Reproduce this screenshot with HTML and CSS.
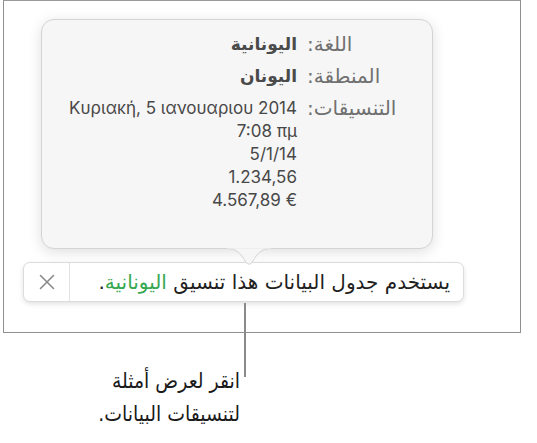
FILE: index.html
```html
<!DOCTYPE html>
<html lang="ar">
  <head>
    <meta charset="UTF-8" />
    <meta name="viewport" content="width=device-width, initial-scale=1.0" />
    <link rel="stylesheet" href="styles.css">
    <title>تنسيق اللغة والمنطقة</title>
  </head>
  <body>
    <div class="frame">
      <!-- popover with the format samples -->
      <div class="popover" dir="rtl">
        <div class="info-grid">
          <div class="info-label">اللغة:</div>
          <div class="info-value bold">اليونانية</div>
          <div class="info-label">المنطقة:</div>
          <div class="info-value bold">اليونان</div>
          <div class="info-label">التنسيقات:</div>
          <div class="info-value latin">
            <div dir="ltr">Κυριακή, 5 ιανουαριου 2014</div>
            <div dir="ltr">7:08 πμ</div>
            <div dir="ltr">5/1/14</div>
            <div dir="ltr">1.234,56</div>
            <div dir="ltr">4.567,89 €</div>
          </div>
        </div>
        <svg class="popover-arrow" width="44" height="19" viewBox="0 0 44 19">
          <path d="M0 0.5 C10 0.5 14 6 18 13 Q22 19.5 26 13 C30 6 34 0.5 44 0.5" fill="#f6f6f6" stroke="#d4d4d4" stroke-width="1" />
          <rect x="0" y="-1" width="44" height="1.5" fill="#f6f6f6" />
        </svg>
      </div>

      <!-- language banner -->
      <div class="banner">
        <div class="banner-close">
          <svg width="16" height="16" viewBox="0 0 16 16">
            <path d="M1.5 1.5 L14.5 14.5 M14.5 1.5 L1.5 14.5" stroke="#8a8a8a" stroke-width="1.6" stroke-linecap="round" />
          </svg>
        </div>
        <div class="banner-text" dir="rtl">
          <span>يستخدم جدول البيانات هذا تنسيق <span class="green">اليونانية</span>.</span>
        </div>
      </div>
    </div>

    <!-- callout -->
    <div class="leader"></div>
    <div class="callout" dir="rtl">
      انقر لعرض أمثلة<br />لتنسيقات البيانات.
    </div>
  </body>
</html>
```

FILE: styles.css
```css
body {
  margin: 0;
  background-color: #ffffff;
  font-family: "DejaVu Sans", sans-serif;
  color: #1c1c1c;
}

.frame {
  box-sizing: border-box;
  width: 518px;
  height: 333px;
  margin-left: 3px;
  border: 1px solid #8f8f8f;
  border-top-color: #9a9a9a;
  padding-top: 18px;
}

.popover {
  position: relative;
  box-sizing: border-box;
  width: 392px;
  height: 230px;
  margin-left: 37px;
  padding: 13px 26px 0 22px;
  background-color: #f6f6f6;
  border: 1px solid #d4d4d4;
  border-radius: 13px;
  box-shadow: 0 3px 14px rgba(0, 0, 0, 0.13);
}

.popover-arrow {
  position: absolute;
  left: 185px;
  bottom: -19px;
}

.info-grid {
  display: grid;
  grid-template-columns: 99px auto;
  column-gap: 10px;
  row-gap: 9px;
  justify-content: start;
  font-size: 20px;
  line-height: 23px;
}

.info-label {
  color: #707070;
  text-align: left;
}

.info-value {
  color: #4a4a4a;
  text-align: right;
}

.bold {
  font-weight: bold;
  font-size: 17px;
}

.latin {
  font-family: "Inter", "Liberation Sans", sans-serif;
  font-size: 17px;
  color: #484848;
}

.banner {
  display: flex;
  box-sizing: border-box;
  width: 441px;
  height: 40px;
  margin-top: 13px;
  margin-left: 19px;
  background-color: #ffffff;
  border: 1px solid #dcdcdc;
  border-radius: 7px;
  box-shadow: 0 2px 5px rgba(0, 0, 0, 0.12);
}

.banner-close {
  display: flex;
  justify-content: center;
  align-items: center;
  width: 45px;
  border-right: 1px solid #e2e2e2;
}

.banner-text {
  flex: 1;
  display: flex;
  align-items: center;
  padding-right: 13px;
  font-size: 20px;
  color: #1f1f1f;
}

.green {
  color: #36a852;
}

.leader {
  position: absolute;
  left: 244px;
  top: 303px;
  width: 2px;
  height: 74px;
  background-color: #8a8a8a;
}

.callout {
  width: 240px;
  margin-top: 32px;
  font-family: "DejaVu Sans Condensed", "DejaVu Sans", sans-serif;
  font-size: 21px;
  line-height: 33px;
  color: #1a1a1a;
  text-align: right;
}
```
